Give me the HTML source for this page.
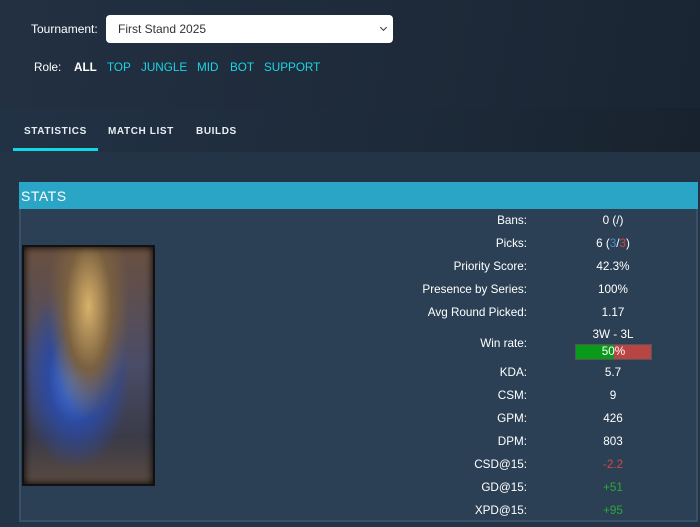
<!DOCTYPE html>
<html><head><style>
*{margin:0;padding:0;box-sizing:border-box}
body{width:700px;height:527px;overflow:hidden;background:#243447;font-family:"Liberation Sans",Roboto,sans-serif;color:#fff;position:relative}
.top{position:absolute;left:0;top:0;width:700px;height:108px;background:linear-gradient(100deg,#223042 0%,#1e2a39 60%,#1a2533 100%)}
.tabs{position:absolute;left:0;top:108px;width:700px;height:44px;background:linear-gradient(100deg,#223245 0%,#1c2836 70%,#18222e 100%)}
.lbl{position:absolute;font-size:12px}
.sel{position:absolute;left:106px;top:15px;width:287px;height:28px;background:#fff;border-radius:4px;color:#333;font-size:12px;padding:7px 12px}
.sel:after{content:"";position:absolute;right:7px;top:10px;width:4px;height:4px;border-right:1.5px solid #333;border-bottom:1.5px solid #333;transform:rotate(45deg)}
.role{position:absolute;top:61px;font-size:11.7px;color:#1ad4e6}
.tab{position:absolute;top:126px;font-size:10px;font-weight:bold;letter-spacing:0.6px;color:#e8eef2}
.ul{position:absolute;left:13px;top:148px;width:85px;height:3px;background:#10d8e8}
.panel{position:absolute;left:19px;top:182px;width:679px;height:340px;background:#2c4055;border:2px solid #3a5068;border-top:none}
.hdr{position:absolute;left:19px;top:182px;width:679px;height:27px;background:#2aa5c5;font-size:14px;padding:6px 2px;letter-spacing:0.5px}
.img{position:absolute;left:22px;top:245px;width:133px;height:241px;background:radial-gradient(ellipse at 50% 25%,#d8b26a 0%,#7a6040 25%,transparent 45%),radial-gradient(ellipse at 40% 55%,#4a7ee8 0%,#2d4aa0 25%,transparent 50%),linear-gradient(180deg,#6a5040,#4a4c68 50%,#3a3a48 80%,#5a4a40);border:2px solid #111;box-shadow:inset 0 0 8px #000}
.r{position:absolute;font-size:11.7px}
.l{right:173px;text-align:right}
.v{left:553px;width:120px;text-align:center}
.bar{position:absolute;left:575px;top:344px;width:77px;height:16px;background:#b84444;border:1px solid #555}
.bar i{position:absolute;left:0;top:0;width:50%;height:100%;background:#0a9a1a}
.bar span{position:absolute;width:100%;text-align:center;top:0;font-size:11.7px}
</style></head><body>
<div class="top"></div><div class="tabs"></div>
<div class="lbl" style="left:31px;top:22px">Tournament:</div>
<div class="sel">First Stand 2025</div>
<div class="lbl" style="left:34px;top:61px;font-size:11.7px">Role:</div>
<div class="role" style="left:74px;color:#fff;font-weight:bold">ALL</div>
<div class="role" style="left:107px">TOP</div>
<div class="role" style="left:141px">JUNGLE</div>
<div class="role" style="left:197px">MID</div>
<div class="role" style="left:230px">BOT</div>
<div class="role" style="left:264px">SUPPORT</div>
<div class="tab" style="left:24px">STATISTICS</div>
<div class="tab" style="left:108px">MATCH LIST</div>
<div class="tab" style="left:196px">BUILDS</div>
<div class="ul"></div>
<div class="panel"></div>
<div class="hdr">STATS</div>
<div class="img"></div>
<div class="r l" style="top:214px">Bans:</div><div class="r v" style="top:214px">0 (/)</div>
<div class="r l" style="top:237px">Picks:</div><div class="r v" style="top:237px">6 (<span style="color:#4a8ad0">3</span>/<span style="color:#e04040">3</span>)</div>
<div class="r l" style="top:260px">Priority Score:</div><div class="r v" style="top:260px">42.3%</div>
<div class="r l" style="top:283px">Presence by Series:</div><div class="r v" style="top:283px">100%</div>
<div class="r l" style="top:306px">Avg Round Picked:</div><div class="r v" style="top:306px">1.17</div>
<div class="r l" style="top:337px">Win rate:</div><div class="r v" style="top:328px">3W - 3L</div>
<div class="bar"><i></i><span>50%</span></div>
<div class="r l" style="top:366px">KDA:</div><div class="r v" style="top:366px">5.7</div>
<div class="r l" style="top:389px">CSM:</div><div class="r v" style="top:389px">9</div>
<div class="r l" style="top:412px">GPM:</div><div class="r v" style="top:412px">426</div>
<div class="r l" style="top:435px">DPM:</div><div class="r v" style="top:435px">803</div>
<div class="r l" style="top:458px">CSD@15:</div><div class="r v" style="top:458px;color:#d04848">-2.2</div>
<div class="r l" style="top:481px">GD@15:</div><div class="r v" style="top:481px;color:#2aa838">+51</div>
<div class="r l" style="top:504px">XPD@15:</div><div class="r v" style="top:504px;color:#2aa838">+95</div>
</body></html>
